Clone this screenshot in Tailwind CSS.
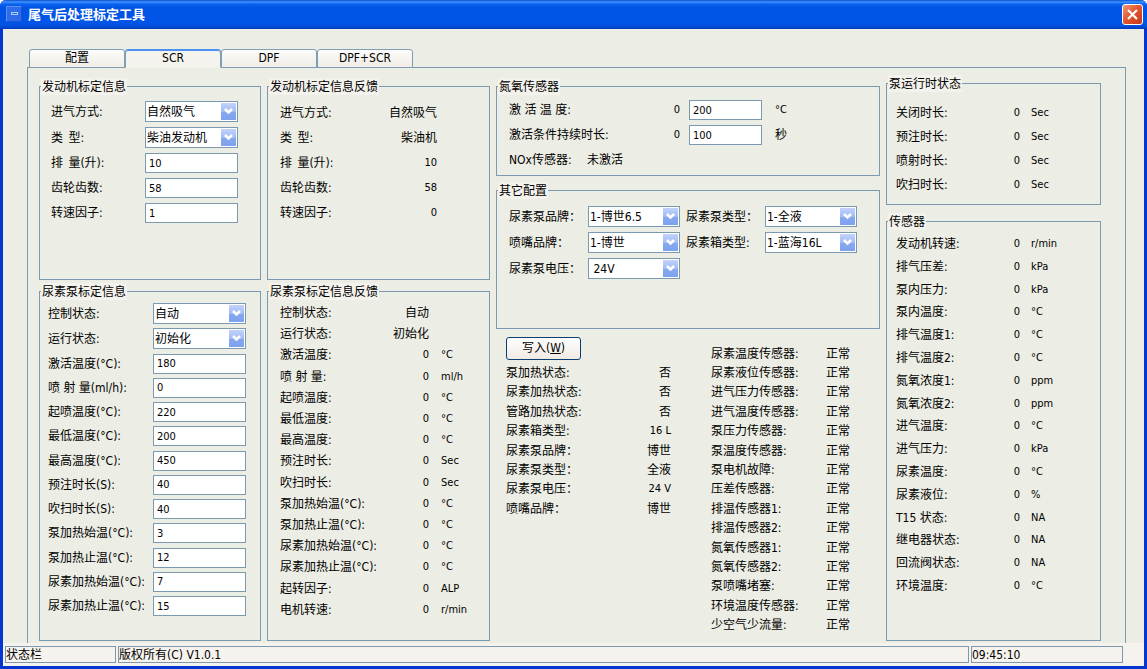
<!DOCTYPE html>
<html lang="zh-CN">
<head>
<meta charset="utf-8">
<meta name="viewport" content="width=device-width, initial-scale=1">
<title>尾气后处理标定工具</title>
<script src="https://cdn.jsdelivr.net/npm/@tailwindcss/browser@4"></script>
</head>
<body class="bg-white font-['DejaVu_Sans_Condensed','Noto_Sans','Noto_Sans_CJK_SC',sans-serif] text-[12px] leading-[16px] text-black">
<svg class="absolute size-0" aria-hidden="true">
  <defs>
    <linearGradient id="drop" x1="0" y1="0" x2="0" y2="1"><stop offset="0" stop-color="#c2d2fb"/><stop offset="0.5" stop-color="#a3bcf6"/><stop offset="0.55" stop-color="#86a8ef"/><stop offset="1" stop-color="#7da2ee"/></linearGradient>
  </defs>
  <symbol id="chev" viewBox="0 0 15 17"><rect width="15" height="17" fill="url(#drop)"/><path d="M4 6l3.500 3.500L11 6" fill="none" stroke="#fff" stroke-width="2.600"/></symbol>
</svg>

<div class="flex min-h-screen flex-col rounded-t-[6px] border-x-[3px] border-b-[3px] border-[#0636d2] bg-[#ecede4]">

  <!-- Title bar -->
  <header class="-mx-[3px] flex h-[29px] items-center justify-between rounded-t-[6px] bg-linear-[180deg,#0a4fd0_0,#3f94ff_2px,#0a62f0_4px,#0053e3_8px,#0055e8_22px,#0050e0_26px,#003bb8_29px] pr-[4px] pl-[6px]">
    <div class="flex items-center gap-[6px]">
      <svg class="-mt-[2px] size-[16px]" viewBox="0 0 16 16" aria-hidden="true"><rect width="16" height="16" rx="1" fill="#2f6cec"/><path d="M.5 15.500V.5h15" fill="none" stroke="#5b90f5"/><path d="M.5 15.500h15V.5" fill="none" stroke="#1d50cc"/><rect x="5.500" y="6.500" width="6" height="2" fill="#2f6cec" stroke="#a8c8ff"/></svg>
      <h1 class="pt-px text-[13px] font-bold text-white">尾气后处理标定工具</h1>
    </div>
    <button type="button" aria-label="关闭" class="flex size-[21px] items-center justify-center rounded-[3px] border border-white bg-linear-[135deg,#f0977c,#e4582f_45%,#c5341a]">
      <svg class="size-[13px]" viewBox="0 0 13 13"><path d="M2 2l9 9M11 2l-9 9" stroke="#fff" stroke-width="2.200" fill="none"/></svg>
    </button>
  </header>

  <main class="flex flex-1 flex-col pt-[20px] pr-[18px] pl-[24px]">
    <!-- Tabs -->
    <div role="tablist" class="relative z-10 -mb-px flex h-[19px] pl-[2px] [&>button]:w-[96px] [&>button]:rounded-t-[3px] [&>button]:border [&>button]:leading-[14px] [&>button]:pb-[2px]">
      <button type="button" role="tab" class="border-[#7f9db3] bg-linear-to-b from-[#fcfcfa] to-[#f0ece6]">配置</button>
      <button type="button" role="tab" aria-selected="true" class="border-[#7f9db3] border-t-[#4a90f0] border-b-[#f3f0ea] bg-[#f5f3ee] shadow-[inset_0_1px_0_#4a90f0]">SCR</button>
      <button type="button" role="tab" class="border-[#7f9db3] bg-linear-to-b from-[#fcfcfa] to-[#f0ece6]">DPF</button>
      <button type="button" role="tab" class="border-[#7f9db3] bg-linear-to-b from-[#fcfcfa] to-[#f0ece6]">DPF+SCR</button>
    </div>

    <!-- SCR page -->
    <div role="tabpanel" class="grid flex-1 grid-cols-[222fr_223fr_384fr_215fr] gap-x-[6px] border-x border-t border-[#7b9ab0] pt-[7px] pr-[24px] pb-[2px] pl-[11px] [&_fieldset]:border [&_fieldset]:border-[#7b9ab0] [&_legend]:ml-px [&_legend]:bg-[#f4f2ed] [&_legend]:px-px [&_legend]:pt-[2px] [&_legend]:leading-[15px] [&_input]:h-[20px] [&_input]:border [&_input]:border-[#7b9ab0] [&_input]:bg-white [&_input]:px-[3px] [&_input]:text-[11px] [&_select]:h-[21px] [&_select]:w-full [&_select]:appearance-none [&_select]:border [&_select]:border-[#7b9ab0] [&_select]:bg-white [&_select]:pl-px [&_select]:pr-[17px] [&_.pick]:relative [&_.pick>svg]:pointer-events-none [&_.pick>svg]:absolute [&_.pick>svg]:top-[2px] [&_.pick>svg]:right-[2px] [&_.pick>svg]:h-[17px] [&_.pick>svg]:w-[15px]">

      <!-- Column 1: editable calibration values -->
      <div class="flex flex-col gap-[3px] pt-[3px]">
        <fieldset>
          <legend>发动机标定信息</legend>
          <div class="grid grid-cols-[1fr_93px] items-center gap-y-[5px] pt-[6px] pr-[22px] pb-[56px] pl-[11px] [&_input]:w-full">
            <label for="intake">进气方式:</label><div class="pick"><select id="intake"><option>自然吸气</option></select><svg><use href="#chev"/></svg></div>
            <label for="etype">类&ensp;型:</label><div class="pick"><select id="etype"><option>柴油发动机</option></select><svg><use href="#chev"/></svg></div>
            <label for="disp">排&ensp;量(升):</label><input id="disp" value="10">
            <label for="teeth">齿轮齿数:</label><input id="teeth" value="58">
            <label for="factor">转速因子:</label><input id="factor" value="1">
          </div>
        </fieldset>
        <fieldset class="flex flex-1 flex-col">
          <legend>尿素泵标定信息</legend>
          <div class="grid flex-1 grid-cols-[1fr_93px] content-between items-center pt-[3px] pr-[14px] pb-[24px] pl-[8px] [&_input]:w-full">
            <label for="ctl">控制状态:</label><div class="pick"><select id="ctl"><option>自动</option></select><svg><use href="#chev"/></svg></div>
            <label for="run">运行状态:</label><div class="pick"><select id="run"><option>初始化</option></select><svg><use href="#chev"/></svg></div>
            <label for="p1">激活温度(°C):</label><input id="p1" value="180">
            <label for="p2">喷 射 量(ml/h):</label><input id="p2" value="0">
            <label for="p3">起喷温度(°C):</label><input id="p3" value="220">
            <label for="p4">最低温度(°C):</label><input id="p4" value="200">
            <label for="p5">最高温度(°C):</label><input id="p5" value="450">
            <label for="p6">预注时长(S):</label><input id="p6" value="40">
            <label for="p7">吹扫时长(S):</label><input id="p7" value="40">
            <label for="p8">泵加热始温(°C):</label><input id="p8" value="3">
            <label for="p9">泵加热止温(°C):</label><input id="p9" value="12">
            <label for="p10">尿素加热始温(°C):</label><input id="p10" value="7">
            <label for="p11">尿素加热止温(°C):</label><input id="p11" value="15">
          </div>
        </fieldset>
      </div>

      <!-- Column 2: feedback values -->
      <div class="flex flex-col gap-[3px] pt-[3px]">
        <fieldset>
          <legend>发动机标定信息反馈</legend>
          <dl class="grid auto-rows-[21px] grid-cols-[1fr_auto] items-center gap-y-[4px] pt-[7px] pr-[52px] pb-[56px] pl-[12px] [&>dd]:text-right">
            <dt>进气方式:</dt><dd>自然吸气</dd>
            <dt>类&ensp;型:</dt><dd>柴油机</dd>
            <dt>排&ensp;量(升):</dt><dd class="text-[11px]">10</dd>
            <dt>齿轮齿数:</dt><dd class="text-[11px]">58</dd>
            <dt>转速因子:</dt><dd class="text-[11px]">0</dd>
          </dl>
        </fieldset>
        <fieldset class="flex flex-1 flex-col">
          <legend>尿素泵标定信息反馈</legend>
          <dl class="grid flex-1 grid-cols-[1fr_auto_60px] content-between pt-[5px] pb-[22px] pl-[12px] [&>:nth-child(3n)]:pl-[12px] [&>:nth-child(3n)]:text-[11px] [&>:nth-child(3n+2)]:text-right [&>:nth-child(n+8):nth-child(3n+2)]:text-[11px]">
            <dt>控制状态:</dt><dd>自动</dd><dd></dd>
            <dt>运行状态:</dt><dd>初始化</dd><dd></dd>
            <dt>激活温度:</dt><dd>0</dd><dd>°C</dd>
            <dt>喷 射 量:</dt><dd>0</dd><dd>ml/h</dd>
            <dt>起喷温度:</dt><dd>0</dd><dd>°C</dd>
            <dt>最低温度:</dt><dd>0</dd><dd>°C</dd>
            <dt>最高温度:</dt><dd>0</dd><dd>°C</dd>
            <dt>预注时长:</dt><dd>0</dd><dd>Sec</dd>
            <dt>吹扫时长:</dt><dd>0</dd><dd>Sec</dd>
            <dt>泵加热始温(°C):</dt><dd>0</dd><dd>°C</dd>
            <dt>泵加热止温(°C):</dt><dd>0</dd><dd>°C</dd>
            <dt>尿素加热始温(°C):</dt><dd>0</dd><dd>°C</dd>
            <dt>尿素加热止温(°C):</dt><dd>0</dd><dd>°C</dd>
            <dt>起转因子:</dt><dd>0</dd><dd>ALP</dd>
            <dt>电机转速:</dt><dd>0</dd><dd>r/min</dd>
          </dl>
        </fieldset>
      </div>

      <!-- Column 3: NOx sensor, other settings, status -->
      <div class="flex flex-col pt-[3px]">
        <fieldset>
          <legend>氮氧传感器</legend>
          <div class="grid grid-cols-[1fr_auto_73px_117px] items-center gap-y-[5px] pt-[5px] pb-[5px] pl-[12px]">
            <label for="nt">激 活 温 度:</label><span class="pr-[9px] text-[11px]">0</span><input id="nt" class="w-full" value="200"><span class="pl-[13px] text-[11px]">°C</span>
            <label for="nd">激活条件持续时长:</label><span class="pr-[9px] text-[11px]">0</span><input id="nd" class="w-full" value="100"><span class="pl-[13px]">秒</span>
            <div class="col-span-4 flex h-[20px] items-center"><span class="w-[78px]">NOx传感器:</span><output>未激活</output></div>
          </div>
        </fieldset>
        <fieldset class="mt-[6px]">
          <legend>其它配置</legend>
          <div class="grid grid-cols-[79px_92px_85px_92px] items-center gap-y-[5px] pt-[7px] pb-[49px] pl-[12px] [&>:nth-child(4n+3)]:pl-[6px]">
            <label for="o1">尿素泵品牌：</label><div class="pick"><select id="o1"><option>1-博世6.5</option></select><svg><use href="#chev"/></svg></div>
            <label for="o2">尿素泵类型：</label><div class="pick"><select id="o2"><option>1-全液</option></select><svg><use href="#chev"/></svg></div>
            <label for="o3">喷嘴品牌：</label><div class="pick"><select id="o3"><option>1-博世</option></select><svg><use href="#chev"/></svg></div>
            <label for="o4">尿素箱类型:</label><div class="pick"><select id="o4"><option>1-蓝海16L</option></select><svg><use href="#chev"/></svg></div>
            <label for="o5">尿素泵电压：</label><div class="pick"><select id="o5"><option>&nbsp;24V</option></select><svg><use href="#chev"/></svg></div>
          </div>
        </fieldset>
        <div class="mt-[15px] mb-[6px] grid flex-1 grid-cols-[1fr_auto_155px_54px] grid-rows-[repeat(15,minmax(0,1fr))] items-center pl-[10px] [&>:nth-child(4n+2)]:text-right [&>:nth-child(4n+3)]:pl-[40px]">
          <button type="button" class="-mt-[11px] h-[23px] w-[75px] rounded-[3px] border border-[#0b3f74] bg-linear-to-b from-white to-[#efeae4]">写入(<u>W</u>)</button><span></span><span>尿素温度传感器:</span><span>正常</span>
          <span>泵加热状态:</span><span>否</span><span>尿素液位传感器:</span><span>正常</span>
          <span>尿素加热状态:</span><span>否</span><span>进气压力传感器:</span><span>正常</span>
          <span>管路加热状态:</span><span>否</span><span>进气温度传感器:</span><span>正常</span>
          <span>尿素箱类型:</span><span class="text-[11px]">16 L</span><span>泵压力传感器:</span><span>正常</span>
          <span>尿素泵品牌：</span><span>博世</span><span>泵温度传感器:</span><span>正常</span>
          <span>尿素泵类型：</span><span>全液</span><span>泵电机故障:</span><span>正常</span>
          <span>尿素泵电压：</span><span class="text-[11px]">24 V</span><span>压差传感器:</span><span>正常</span>
          <span>喷嘴品牌：</span><span>博世</span><span>排温传感器1:</span><span>正常</span>
          <span></span><span></span><span>排温传感器2:</span><span>正常</span>
          <span></span><span></span><span>氮氧传感器1:</span><span>正常</span>
          <span></span><span></span><span>氮氧传感器2:</span><span>正常</span>
          <span></span><span></span><span>泵喷嘴堵塞:</span><span>正常</span>
          <span></span><span></span><span>环境温度传感器:</span><span>正常</span>
          <span></span><span></span><span>少空气少流量:</span><span>正常</span>
        </div>
      </div>

      <!-- Column 4: pump run times and sensors -->
      <div class="flex flex-col gap-[8px] [&_dl]:grid [&_dl]:grid-cols-[1fr_auto_80px] [&_dl]:pl-[9px] [&_dl>:nth-child(3n)]:pl-[11px] [&_dd]:text-[11px]">
        <fieldset>
          <legend>泵运行时状态</legend>
          <dl class="auto-rows-[24px] items-center pt-[9px] pb-[7px]">
            <dt>关闭时长:</dt><dd>0</dd><dd>Sec</dd>
            <dt>预注时长:</dt><dd>0</dd><dd>Sec</dd>
            <dt>喷射时长:</dt><dd>0</dd><dd>Sec</dd>
            <dt>吹扫时长:</dt><dd>0</dd><dd>Sec</dd>
          </dl>
        </fieldset>
        <fieldset class="flex flex-1 flex-col">
          <legend>传感器</legend>
          <dl class="flex-1 content-between pt-[6px] pb-[46px]">
            <dt>发动机转速:</dt><dd>0</dd><dd>r/min</dd>
            <dt>排气压差:</dt><dd>0</dd><dd>kPa</dd>
            <dt>泵内压力:</dt><dd>0</dd><dd>kPa</dd>
            <dt>泵内温度:</dt><dd>0</dd><dd>°C</dd>
            <dt>排气温度1:</dt><dd>0</dd><dd>°C</dd>
            <dt>排气温度2:</dt><dd>0</dd><dd>°C</dd>
            <dt>氮氧浓度1:</dt><dd>0</dd><dd>ppm</dd>
            <dt>氮氧浓度2:</dt><dd>0</dd><dd>ppm</dd>
            <dt>进气温度:</dt><dd>0</dd><dd>°C</dd>
            <dt>进气压力:</dt><dd>0</dd><dd>kPa</dd>
            <dt>尿素温度:</dt><dd>0</dd><dd>°C</dd>
            <dt>尿素液位:</dt><dd>0</dd><dd>%</dd>
            <dt>T15 状态:</dt><dd>0</dd><dd>NA</dd>
            <dt>继电器状态:</dt><dd>0</dd><dd>NA</dd>
            <dt>回流阀状态:</dt><dd>0</dd><dd>NA</dd>
            <dt>环境温度:</dt><dd>0</dd><dd>°C</dd>
          </dl>
        </fieldset>
      </div>
    </div>
  </main>

  <!-- Status bar -->
  <footer class="flex gap-[2px] bg-[#f6f3ee] pt-[3px] pr-[21px] pb-[3px] pl-[2px] [&>span]:h-[17px] [&>span]:border [&>span]:border-[#7b9ab0] [&>span]:leading-[16px]">
    <span class="w-[111px]">状态栏</span><span class="flex-1">版权所有(C) V1.0.1</span><span class="w-[152px]">09:45:10</span>
  </footer>
</div>
</body>
</html>
